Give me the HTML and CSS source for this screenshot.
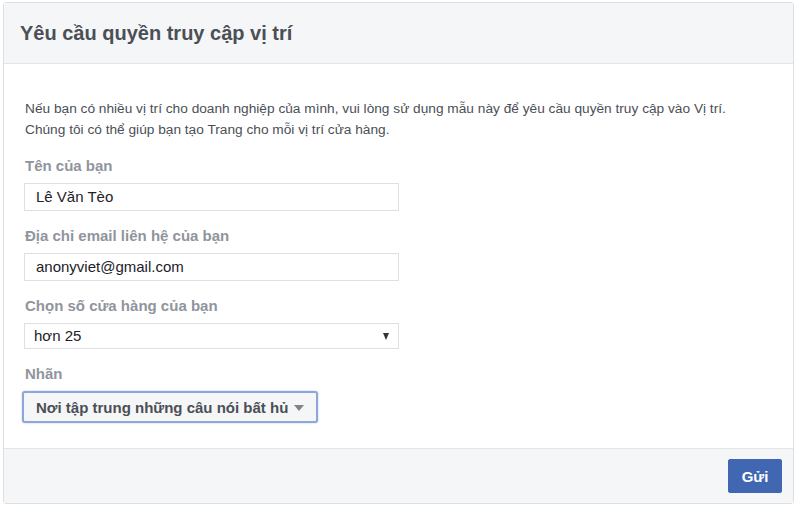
FILE: index.html
```html
<!DOCTYPE html>
<html lang="vi">
<head>
    <meta charset="UTF-8">
    <title>Yêu cầu quyền truy cập vị trí</title>
    <link rel="stylesheet" href="styles.css">
</head>
<body>
    <section class="dialog">
        <header class="dialog-header">
            <h2>Yêu cầu quyền truy cập vị trí</h2>
        </header>

        <div class="dialog-body">
            <p class="intro">Nếu bạn có nhiều vị trí cho doanh nghiệp của mình, vui lòng sử dụng mẫu này để yêu cầu quyền truy cập vào Vị trí.<br>Chúng tôi có thể giúp bạn tạo Trang cho mỗi vị trí cửa hàng.</p>

            <div class="field">
                <label class="field-label">Tên của bạn</label>
                <div class="text-input">Lê Văn Tèo</div>
            </div>

            <div class="field">
                <label class="field-label">Địa chỉ email liên hệ của bạn</label>
                <div class="text-input">anonyviet@gmail.com</div>
            </div>

            <div class="field">
                <label class="field-label">Chọn số cửa hàng của bạn</label>
                <div class="text-input select">
                    <span>hơn 25</span>
                    <span class="select-arrow"></span>
                </div>
            </div>

            <div class="field">
                <label class="field-label">Nhãn</label>
                <div class="dropdown-btn">
                    <span>Nơi tập trung những câu nói bất hủ</span>
                    <span class="caret"></span>
                </div>
            </div>
        </div>

        <footer class="dialog-footer">
            <button class="btn-primary">Gửi</button>
        </footer>
    </section>
</body>
</html>
```

FILE: styles.css
```css
* {
    margin: 0;
    padding: 0;
    box-sizing: border-box;
}
body {
    font-family: "Liberation Sans", Arial, sans-serif;
    background: #fff;
    color: #1d2129;
}
.dialog {
    width: 791px;
    height: 502px;
    margin: 2px 0 0 3px;
    border: 1px solid #dddfe2;
    border-radius: 3px;
    display: flex;
    flex-direction: column;
    background: #fff;
}
.dialog-header {
    height: 61px;
    background: #f5f6f7;
    border-bottom: 1px solid #e5e5e5;
    padding: 0 16px;
    display: flex;
    align-items: center;
}
.dialog-header h2 {
    font-size: 20px;
    font-weight: bold;
    color: #4b4f56;
    padding-top: 1px;
}
.dialog-body {
    flex: 1;
    padding: 34px 20px 0 21px;
}
.intro {
    font-size: 13.7px;
    line-height: 21px;
    color: #4b4f56;
}
.field {
    margin-top: 17px;
}
.field + .field {
    margin-top: 16px;
}
.field-label {
    display: block;
    font-size: 15px;
    font-weight: bold;
    color: #90949c;
    line-height: 18px;
    margin-bottom: 8px;
}
.text-input {
    width: 375px;
    height: 28px;
    margin-left: -1px;
    border: 1px solid #dddfe2;
    padding: 0 11px;
    font-size: 15px;
    line-height: 26px;
    color: #1d2129;
    background: #fff;
}
.select {
    display: flex;
    justify-content: space-between;
    align-items: center;
    height: 26px;
    padding: 0 9px 0 9px;
}
.select-arrow {
    margin-top: 1px;
    border-left: 3.5px solid transparent;
    border-right: 3.5px solid transparent;
    border-top: 7px solid #333;
}
.dropdown-btn {
    display: inline-flex;
    align-items: center;
    height: 32px;
    margin-left: -3px;
    padding: 0 12px;
    border: 2px solid #8fa6d8;
    border-radius: 3px;
    background: #f5f6f7;
    font-size: 15px;
    font-weight: bold;
    color: #4b4f56;
    box-shadow: 0 0 2px #aebde2;
}
.caret {
    margin-left: 6px;
    margin-top: 2px;
    border-left: 5px solid transparent;
    border-right: 5px solid transparent;
    border-top: 6px solid #7f838a;
}
.dialog-footer {
    height: 55px;
    background: #f5f6f7;
    border-top: 1px solid #e5e5e5;
    display: flex;
    align-items: center;
    justify-content: flex-end;
    padding: 0 11px 0 0;
}
.btn-primary {
    width: 54px;
    height: 34px;
    background: #4267b2;
    border: 1px solid #4267b2;
    border-radius: 2px;
    color: #fff;
    font-family: inherit;
    font-size: 15px;
    font-weight: bold;
}
```
